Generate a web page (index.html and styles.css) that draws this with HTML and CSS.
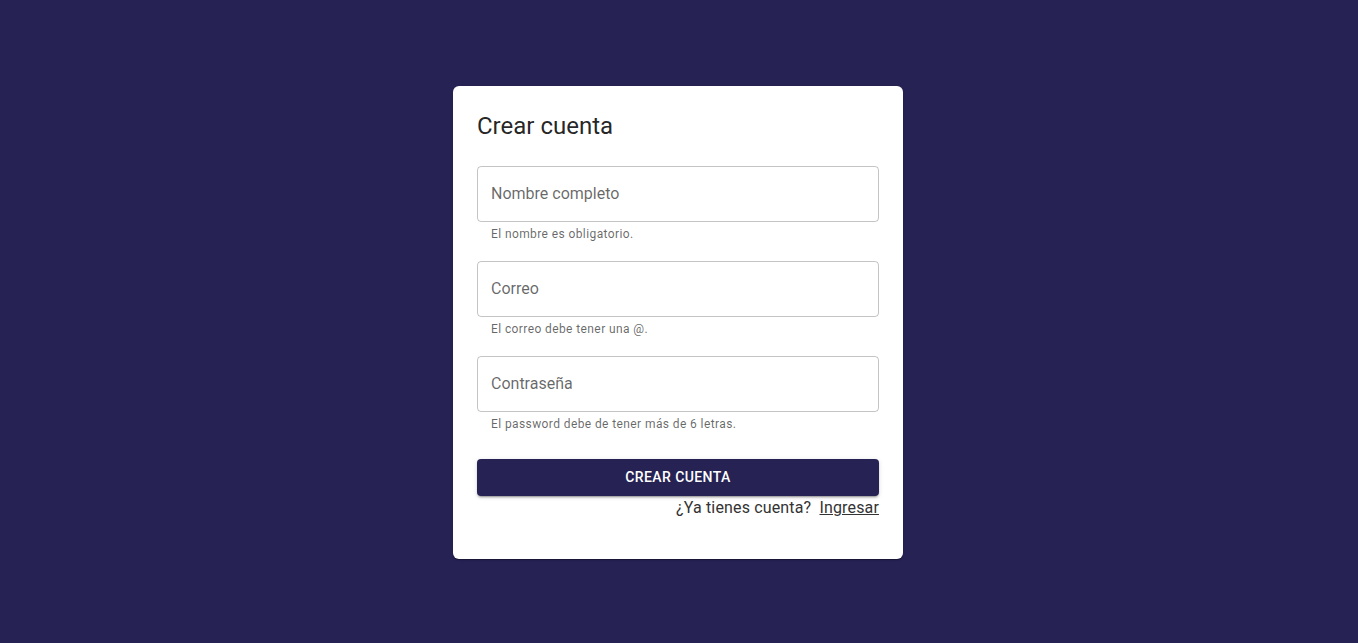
FILE: index.html
```html
<!DOCTYPE html>
<html lang="es">
<head>
<meta charset="utf-8">
<title>Crear cuenta</title>
<link rel="stylesheet" href="styles.css">
</head>
<body>
<main class="page">
  <form class="card">
    <h1 class="title">Crear cuenta</h1>
    <div class="field">
      <div class="box"><span class="label">Nombre completo</span></div>
      <p class="helper">El nombre es obligatorio.</p>
    </div>
    <div class="field">
      <div class="box"><span class="label">Correo</span></div>
      <p class="helper">El correo debe tener una @.</p>
    </div>
    <div class="field">
      <div class="box"><span class="label">Contraseña</span></div>
      <p class="helper">El password debe de tener más de 6 letras.</p>
    </div>
    <button type="button" class="btn">Crear cuenta</button>
    <p class="footer">¿Ya tienes cuenta?&nbsp; <a class="link" href="#">Ingresar</a></p>
  </form>
</main>
</body>
</html>
```
FILE: styles.css
```css
* { box-sizing: border-box; }
html, body { margin: 0; height: 100%; }
body {
  background: #262254;
  font-family: Roboto, "Noto Sans", sans-serif;
}
.page {
  display: flex;
  justify-content: center;
  padding-top: 86px;
  padding-right: 2px;
}
.card {
  width: 450px;
  background: #fff;
  border-radius: 6px;
  padding: 24px 24px 39px;
  box-shadow: 0 2px 1px -1px rgba(0,0,0,0.2), 0 1px 1px 0 rgba(0,0,0,0.14), 0 1px 3px 0 rgba(0,0,0,0.12);
  display: flex;
  flex-direction: column;
}
.title {
  margin: 0 0 24px;
  font-size: 24px;
  font-weight: 400;
  line-height: 32px;
  color: rgba(0,0,0,0.87);
}
.field { margin-bottom: 16px; }
.field:nth-of-type(3) { margin-bottom: 24px; }
.box {
  height: 56px;
  border: 1px solid rgba(0,0,0,0.23);
  border-radius: 4px;
  display: flex;
  align-items: center;
  padding: 0 13px 2px;
}
.label {
  font-size: 16px;
  color: rgba(0,0,0,0.6);
  line-height: 23px;
}
.helper {
  margin: 2px 14px 0;
  padding-bottom: 1px;
  font-size: 12px;
  line-height: 20px;
  letter-spacing: 0.03333em;
  color: rgba(0,0,0,0.6);
}
.btn {
  height: 36.5px;
  border: none;
  border-radius: 4px;
  background: #262254;
  color: #fff;
  font-family: inherit;
  font-size: 14px;
  font-weight: 500;
  letter-spacing: 0.02857em;
  text-transform: uppercase;
  box-shadow: 0 3px 1px -2px rgba(0,0,0,0.2), 0 2px 2px 0 rgba(0,0,0,0.14), 0 1px 5px 0 rgba(0,0,0,0.12);
}
.footer {
  margin: 0;
  text-align: right;
  font-size: 16px;
  line-height: 24px;
  letter-spacing: 0.00938em;
  color: #333;
}
.link {
  color: #333;
  text-decoration: underline;
}
```
